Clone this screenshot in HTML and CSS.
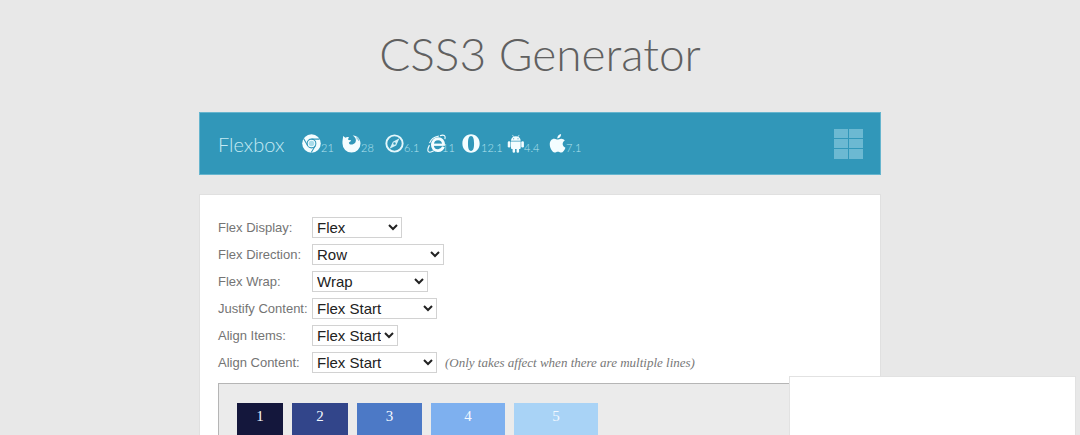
FILE: index.html
```html
<!DOCTYPE html>
<html lang="en">
<head>
<meta charset="utf-8">
<title>CSS3 Generator</title>
<link rel="stylesheet" href="styles.css">
</head>
<body>
<main class="page">
  <h1 class="title">CSS3 Generator</h1>
  <header class="bar">
    <h2 class="bar-name">Flexbox</h2>
    <ul class="support">
      <li><svg class="icon" viewBox="0 0 20 20"><circle cx="10" cy="10" r="9.800" fill="#f4fdff"/><g fill="none" stroke="#3197b9" stroke-width="1.1"><circle cx="10" cy="10" r="4.600"/><path d="M10 5.400H18.400M6 12.300 1.800 5M14 12.300 9.700 19.500"/></g><circle cx="10" cy="10" r="2.900" fill="#a9dcea"/></svg><span>21</span></li>
      <li><svg class="icon" viewBox="0 0 20 20"><path fill="#f4fdff" d="M1.200 2.200 3.600 4C5 3 6.300 3.200 7.400 3.600 6.600 4.300 6.300 5.200 6.700 6.200L9.500 6.600C9.700 7.800 8 8.200 7.200 9.100 7.600 11 9.700 11.800 12.100 10.600 14.700 9.300 15.400 6.200 13.700 3.900 13 2.900 12.400 2.300 11.200 1.600 15.700 1.200 19.500 5.100 19.500 10A9.500 9.500 0 0 1 .5 10C.3 7 1 5.400 1.200 2.200Z"/><path fill="none" stroke="#3197b9" stroke-width=".7" d="m15.800 2.600.3 3.200M17.800 4.400l-.3 2.800"/></svg><span>28</span></li>
      <li><svg class="icon" viewBox="0 0 20 20"><circle cx="10" cy="10" r="8.600" fill="none" stroke="#e4f7fb" stroke-width="2"/><path fill="#d3f0f7" fill-rule="evenodd" d="m15.200 4.600-3.400 7.500-7 3.300 3.500-7.200zM10 8.700a1.300 1.300 0 1 0 0 2.600 1.300 1.300 0 0 0 0-2.600Z"/></svg><span>6.1</span></li>
      <li class="under"><svg class="icon" viewBox="0 0 20 20"><path fill="none" stroke="#f4fdff" stroke-width="3" d="M17.300 13.500C16.200 16.300 14 17.700 11.300 17.500 7.800 17.200 5.500 14.600 5.700 11.100 5.900 7.600 8.300 5 11.700 5c3.600 0 5.900 2.700 5.700 6.500"/><path stroke="#f4fdff" stroke-width="2.400" d="M6 11.300h12.900"/><path fill="none" stroke="#f4fdff" stroke-width="1.200" d="M18.800 5.300C19.900 1.400 17.600.3 13.600 1.800M2.600 11.700C1.100 14.500.4 17 1.300 18.300c1 1.300 3.300.9 5.800-.6M2.700 9.600C3.900 6 7.500 3 12.500 2.100"/></svg><span>11</span></li>
      <li><svg class="icon" viewBox="0 0 20 20"><path fill="#f4fdff" fill-rule="evenodd" d="M9.500.3C4.200.3.4 4.500.4 10s3.800 9.700 9.100 9.700 9.100-4.200 9.100-9.700S14.800.3 9.500.3Zm0 1.900c2.500 0 3.200 3.400 3.200 7.800s-.7 7.800-3.200 7.800S6.300 14.400 6.300 10s.7-7.800 3.200-7.800Z"/></svg><span>12.1</span></li>
      <li class="tight"><svg class="icon" viewBox="0 0 20 20"><g fill="#f4fdff"><path d="M4.200 7.100c0-2.500 2-4.700 5.100-4.700s5.100 2.200 5.100 4.700zM4.200 7.800h10.200v7a1 1 0 0 1-1 1H5.200a1 1 0 0 1-1-1z"/><rect x=".8" y="7.600" width="2.800" height="6.600" rx="1.300"/><rect x="15" y="7.600" width="2.800" height="6.600" rx="1.300"/><rect x="5.900" y="14" width="2.600" height="5.700" rx="1.300"/><rect x="10.100" y="14" width="2.600" height="5.700" rx="1.300"/></g><path stroke="#f4fdff" stroke-width=".7" d="M6.900 3 5.800 1M11.700 3l1.100-2"/><g fill="#3197b9"><circle cx="7" cy="5" r=".6"/><circle cx="11.600" cy="5" r=".6"/></g></svg><span>4.4</span></li>
      <li class="tight"><svg class="icon" viewBox="0 0 20 20"><path fill="#f4fdff" d="M12.700 0c.2 2.500-1.700 4.700-4 4.700C8.500 2.500 10.500.3 12.700 0ZM9 5.900c1 0 2-1 3.900-1 1.500 0 2.900.8 3.700 2-3.300 2-2.700 6.300.7 7.500-.8 2.300-2.700 5.100-4.300 5.100-1.400 0-2-.8-3.600-.8s-2.200.8-3.600.8C3.600 19.500.8 14.900.8 10.900.8 7.200 3 5 5.500 5 7.100 5 8.200 5.900 9 5.900Z"/></svg><span>7.1</span></li>
    </ul>
    <button class="grid-button" type="button" aria-label="Open generator menu">
      <i></i><i></i><i></i><i></i><i></i><i></i>
    </button>
  </header>
  <section class="panel">
    <form class="options">
      <div class="row"><label for="display">Flex Display:</label><select id="display" class="w-90"><option>Flex</option><option>Inline Flex</option></select></div>
      <div class="row"><label for="direction">Flex Direction:</label><select id="direction" class="w-132"><option>Row</option><option>Row Reverse</option><option>Column</option><option>Column Reverse</option></select></div>
      <div class="row"><label for="wrap">Flex Wrap:</label><select id="wrap" class="w-116"><option>Wrap</option><option>No Wrap</option><option>Wrap Reverse</option></select></div>
      <div class="row"><label for="justify">Justify Content:</label><select id="justify" class="w-125"><option>Flex Start</option><option>Flex End</option><option>Center</option><option>Space Between</option></select></div>
      <div class="row"><label for="items">Align Items:</label><select id="items" class="w-86"><option>Flex Start</option><option>Flex End</option><option>Center</option></select></div>
      <div class="row"><label for="content">Align Content:</label><select id="content" class="w-125"><option>Flex Start</option><option>Flex End</option><option>Space Between</option></select><em class="note">(Only takes affect when there are multiple lines)</em></div>
    </form>
    <div class="preview">
      <div class="box box-1">1</div>
      <div class="box box-2">2</div>
      <div class="box box-3">3</div>
      <div class="box box-4">4</div>
      <div class="box box-5">5</div>
    </div>
  </section>
</main>
<aside class="dock"></aside>
</body>
</html>
```
FILE: styles.css
```css
* { box-sizing: border-box; }

body {
  margin: 0;
  background: #e8e8e8;
  font-family: "Liberation Sans", Arial, sans-serif;
}

.page {
  display: flex;
  flex-direction: column;
  max-width: 682px;
  min-height: 100vh;
  margin: 0 auto;
}

.title {
  margin: 0;
  padding: 22px 0 26px;
  font: 300 46px/64px Lato, sans-serif;
  text-align: center;
  color: #606060;
}

.bar {
  display: flex;
  align-items: center;
  height: 63px;
  padding: 0 18px;
  background: #3197b9;
  border: 1px solid #66b5ce;
  color: #c5eaf3;
}

.bar-name {
  width: 84px;
  margin: 0;
  font: 300 20px/28px Lato, sans-serif;
}

.support {
  display: grid;
  grid-template-columns: 40px 43px 42px 35px 45px 42px 32px;
  margin: 0;
  padding: 0;
  list-style: none;
  font: 300 11px/10px Lato, sans-serif;
  color: #b4e2ee;
}

.support li {
  display: flex;
  align-items: flex-end;
}

.support .tight span { margin-left: -2px; }
.support .under span { margin-left: -4px; }

.icon {
  flex: none;
  width: 19px;
  height: 19px;
}

.grid-button {
  display: grid;
  grid-template-columns: 1fr 1fr;
  gap: 1px;
  width: 29px;
  height: 30px;
  margin-left: auto;
  margin-right: -1px;
  padding: 0;
  border: 0;
  background: transparent;
}

.grid-button i { background: #6cb9d2; }

.panel {
  display: flex;
  flex: 1;
  flex-direction: column;
  margin-top: 19px;
  padding: 19px 18px 0;
  background: #fff;
  border: 1px solid #e0e0e0;
  border-bottom: 0;
}

.row {
  display: flex;
  align-items: center;
  height: 27px;
}

.row label {
  width: 94px;
  font-size: 13px;
  color: #747474;
  white-space: nowrap;
}

.row select {
  height: 21px;
  padding: 0;
  border: 1px solid #d2d2d2;
  background: #fff;
  font: 15px "Liberation Sans", Arial, sans-serif;
  color: #222;
}

.w-86 { width: 86px; }
.w-90 { width: 90px; }
.w-116 { width: 116px; }
.w-125 { width: 125px; }
.w-132 { width: 132px; }

.note {
  margin-left: 8px;
  font: italic 13px "Liberation Serif", "Times New Roman", serif;
  color: #777;
}

.preview {
  display: flex;
  flex: 1;
  gap: 9px;
  margin-top: 7px;
  padding: 19px 18px 0;
  background: #ebebeb;
  border: 1px solid #b5b5b5;
  border-bottom: 0;
}

.box {
  padding-top: 3px;
  font: 15px/20px "Liberation Serif", "Times New Roman", serif;
  text-align: center;
  color: #f2f8ff;
}

.box-1 { width: 46px; background: #14173c; }
.box-2 { width: 56px; background: #32458a; }
.box-3 { width: 65px; background: #4c79c6; }
.box-4 { width: 74px; background: #7eb0ef; }
.box-5 { width: 84px; background: #a9d3f6; }

.dock {
  position: fixed;
  right: 4px;
  bottom: 0;
  width: 287px;
  height: 59px;
  background: #fff;
  border: 1px solid #e2e2e2;
  border-bottom: 0;
}
```
